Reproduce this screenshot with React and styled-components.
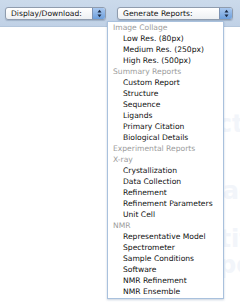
import styled, { createGlobalStyle } from 'styled-components'

const GlobalStyle = createGlobalStyle`
  html, body {
    margin: 0;
    padding: 0;
    background: #ffffff;
  }
  body {
    font-family: "DejaVu Sans", "Liberation Sans", sans-serif;
    width: 240px;
    height: 302px;
    overflow: hidden;
  }
`

const menu = [
  { header: 'Image Collage', items: ['Low Res. (80px)', 'Medium Res. (250px)', 'High Res. (500px)'] },
  { header: 'Summary Reports', items: ['Custom Report', 'Structure', 'Sequence', 'Ligands', 'Primary Citation', 'Biological Details'] },
  { header: 'Experimental Reports', items: [] },
  { header: 'X-ray', items: ['Crystallization', 'Data Collection', 'Refinement', 'Refinement Parameters', 'Unit Cell'] },
  { header: 'NMR', items: ['Representative Model', 'Spectrometer', 'Sample Conditions', 'Software', 'NMR Refinement', 'NMR Ensemble'] },
]

// faint page headings showing through behind the open menu
const watermarks = [
  { text: 'Structure c', gap: 0 },
  { text: 'Characteri', gap: 41 },
  { text: 'Identificati', gap: 22 },
  { text: 'Compound', gap: 0 },
]

function Stepper() {
  return (
    <Arrows>
      <svg width="5" height="9" viewBox="0 0 5 9">
        <path d="M0.5 3.5 L2.5 0.8 L4.5 3.5 Z" fill="#1b2a44" />
        <path d="M0.5 5.5 L2.5 8.2 L4.5 5.5 Z" fill="#1b2a44" />
      </svg>
    </Arrows>
  )
}

export default function App() {
  return (
    <Page>
      <GlobalStyle />
      <Toolbar>
        <Select $width={101}>
          <Label>Display/Download:</Label>
          <Stepper />
        </Select>
        <SelectWrap>
          <Select $width={116}>
            <Label>Generate Reports:</Label>
            <Stepper />
          </Select>
          <Dropdown>
            {menu.map((group) => (
              <Group key={group.header}>
                <Header>{group.header}</Header>
                {group.items.map((item) => (
                  <Item key={item}>{item}</Item>
                ))}
              </Group>
            ))}
          </Dropdown>
        </SelectWrap>
      </Toolbar>
      <Content>
        {watermarks.map((w) => (
          <Watermark key={w.text} $gap={w.gap}>{w.text}</Watermark>
        ))}
      </Content>
    </Page>
  )
}

const Page = styled.div`
  width: 240px;
  height: 302px;
  background: #ffffff;
  overflow: hidden;
`

const Toolbar = styled.div`
  height: 27px;
  display: flex;
  align-items: flex-start;
  gap: 11px;
  padding: 7px 0 0 5px;
  box-sizing: border-box;
  background: linear-gradient(#cbdaeb, #c0d1e6);
  border-bottom: 1px solid #b3c6dc;
  position: relative;
  z-index: 2;
`

const SelectWrap = styled.div`
  position: relative;
`

const Select = styled.div`
  width: ${(p) => p.$width}px;
  height: 13px;
  box-sizing: border-box;
  display: flex;
  align-items: center;
  justify-content: space-between;
  border: 1px solid #8f9cae;
  border-radius: 3px;
  background: linear-gradient(#ffffff, #eef0f3);
  box-shadow: 0 1px 1px rgba(60, 80, 110, 0.25);
  overflow: hidden;
`

const Label = styled.span`
  font-size: 7.6px;
  color: #141414;
  padding-left: 5px;
  line-height: 11px;
`

const Arrows = styled.span`
  width: 12px;
  height: 100%;
  display: flex;
  align-items: center;
  justify-content: center;
  background: linear-gradient(#a9c8ef, #6d9fdc);
  border-left: 1px solid #7d93b3;
`

const Dropdown = styled.div`
  position: absolute;
  top: 14px;
  left: -10px;
  width: 117px;
  box-sizing: border-box;
  background: #ffffff;
  border: 1px solid #a9c1dd;
  padding: 0 0 1px 5px;
  box-shadow: 0 1px 2px rgba(80, 110, 150, 0.3);
`

const Group = styled.div`
  display: flex;
  flex-direction: column;
`

const Header = styled.div`
  font-size: 7.6px;
  line-height: 11px;
  color: #9c9c9c;
  white-space: nowrap;
`

const Item = styled.div`
  font-size: 7.6px;
  line-height: 11px;
  color: #111111;
  padding-left: 10px;
  white-space: nowrap;
`

const Content = styled.div`
  display: flex;
  flex-direction: column;
  padding: 84px 0 0 160px;
`

const Watermark = styled.div`
  margin-top: ${(p) => p.$gap}px;
  font-family: "DejaVu Sans", sans-serif;
  font-size: 24px;
  font-weight: bold;
  color: #f2f5fa;
  white-space: nowrap;
  line-height: 26px;
`
